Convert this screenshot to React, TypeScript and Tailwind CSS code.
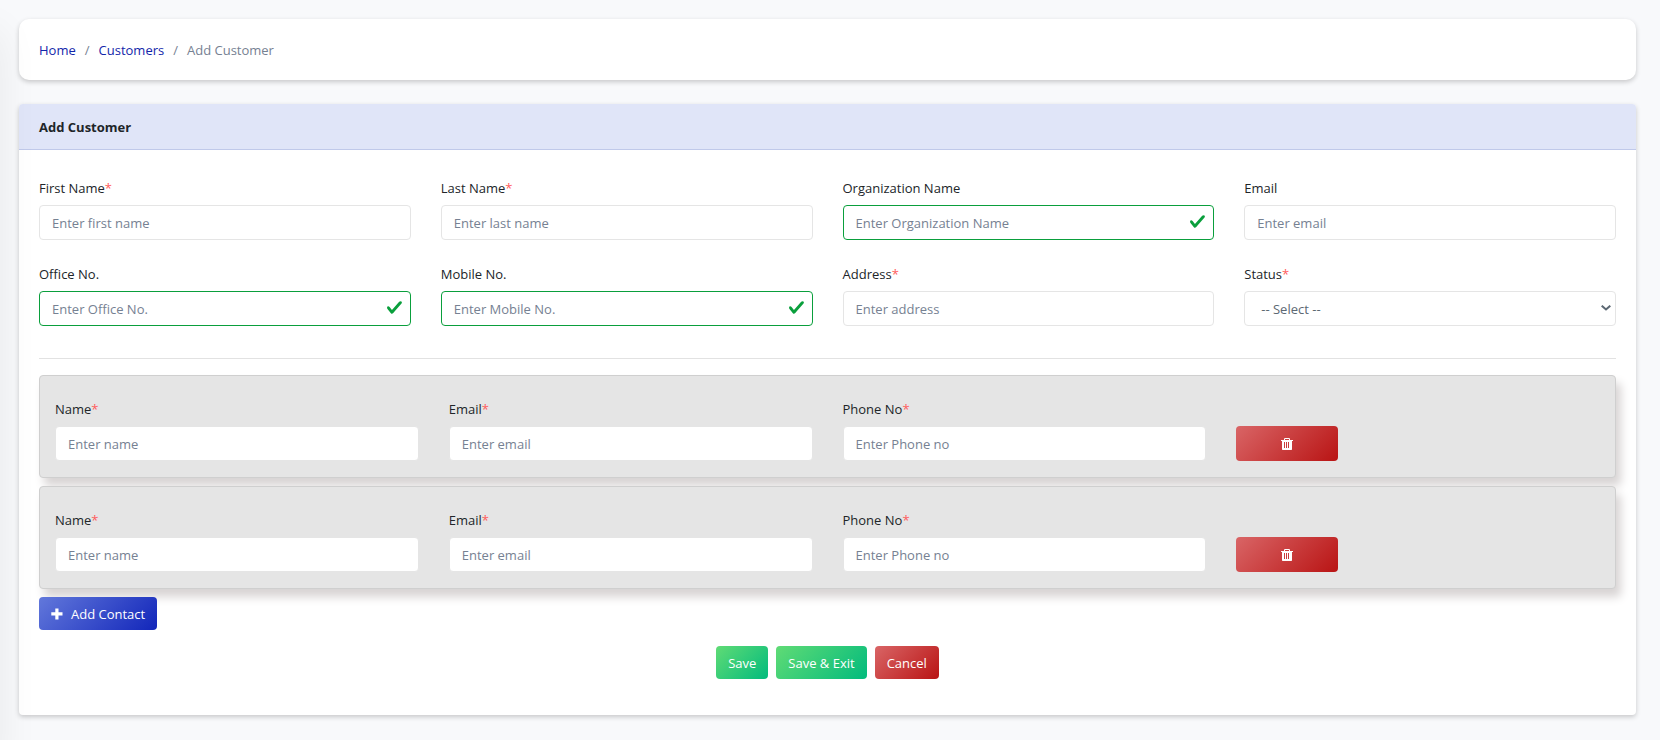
import { useState } from "react";

interface FieldProps {
  id: string;
  label: string;
  placeholder: string;
  required?: boolean;
  valid?: boolean;
  type?: string;
}

interface Contact {
  id: number;
}

const labelClass = "block h-5 mb-[7px] leading-5 text-[#212529]";
const inputClass =
  "block w-full h-[35px] px-3 rounded border bg-white text-[#5c6873] placeholder:text-[#768192] placeholder:opacity-100 outline-none";
const redButton = "rounded text-white bg-linear-[135deg] from-[#d96566] to-[#b91414]";
const greenButton =
  "h-[33px] px-3 rounded text-white bg-linear-[135deg] from-[#60db75] to-[#02bb7d]";

const Required = () => <span className="text-[#ff5c5c]">*</span>;

const Field = ({ id, label, placeholder, required, valid, type = "text" }: FieldProps) => {
  return (
    <div>
      <label htmlFor={id} className={labelClass}>
        {label}
        {required && <Required />}
      </label>
      <div className="relative">
        <input
          id={id}
          type={type}
          placeholder={placeholder}
          className={`${inputClass} ${valid ? "border-[#0a9f3c] pr-9" : "border-[#e5e5e5]"}`}
        />
        {valid && (
          <svg
            viewBox="0 0 8 8"
            className="absolute right-2 top-2 w-[17px] h-[17px] text-[#0a9f3c]"
            fill="currentColor"
            aria-hidden="true"
          >
            <path d="M2.3 6.73 .6 4.53c-.4-1.04.46-1.4 1.1-.8l1.1 1.4 3.4-3.8c.6-.63 1.6-.27 1.2.7l-4 4.6c-.43.5-.8.4-1.1.1z" />
          </svg>
        )}
      </div>
    </div>
  );
};

const PlusIcon = () => (
  <svg viewBox="0 0 12 12" className="w-3 h-3" fill="currentColor" aria-hidden="true">
    <path d="M4.300.5h3.200v3.800h4v3.200h-4v4H4.300v-4H.300V4.300h4z" />
  </svg>
);

const TrashIcon = () => (
  <svg viewBox="0 0 12 12" className="w-3 h-3" fill="currentColor" aria-hidden="true">
    <path
      fillRule="evenodd"
      d="M3 2V.8L3.8 0h4.4L9 .8V2h3v1h-1v8.4l-.6.6H1.6L1 11.400V3H0V2zM4 2h4V1H4zM3 4V10h1V4zM5 4V10h1V4zM7 4V10h1V4z"
    />
  </svg>
);

const ContactRow = ({ contact, onRemove }: { contact: Contact; onRemove: () => void }) => {
  return (
    <div className="grid grid-cols-12 gap-x-[30px] items-end mb-2 px-[15px] pt-[23px] pb-4 rounded border border-[#cfcfcf] bg-[#e5e5e5] shadow-[5px_8px_10px_0_#d8d4d4]">
      <div className="col-span-3">
        <Field id={`name-${contact.id}`} label="Name" placeholder="Enter name" required />
      </div>
      <div className="col-span-3">
        <Field id={`email-${contact.id}`} label="Email" placeholder="Enter email" type="email" required />
      </div>
      <div className="col-span-3">
        <Field id={`phone-${contact.id}`} label="Phone No" placeholder="Enter Phone no" type="tel" required />
      </div>
      <button
        type="button"
        aria-label="Delete contact"
        onClick={onRemove}
        className={`flex items-center justify-center h-[35px] ${redButton}`}
      >
        <TrashIcon />
      </button>
    </div>
  );
};

const App = () => {
  const [contacts, setContacts] = useState<Contact[]>([{ id: 1 }, { id: 2 }]);

  const addContact = () => {
    setContacts([...contacts, { id: Date.now() }]);
  };

  const removeContact = (id: number) => {
    setContacts(contacts.filter((c) => c.id !== id));
  };

  return (
    <div className="relative min-h-screen overflow-hidden pl-[19px] pr-6 pt-[19px] pb-6 bg-[#f8f9fb] font-['Open_Sans',sans-serif] text-[13px] leading-5 text-[#212529]">
      {/* Sidebar shadow */}
      <div className="absolute right-full top-8 -bottom-10 w-10 shadow-[0_0_40px_rgba(0,0,0,0.07)] pointer-events-none" />

      <nav
        aria-label="Breadcrumb"
        className="flex items-center gap-[9px] h-[61px] mb-6 px-5 rounded-[10px] bg-white shadow-[0_2px_5px_rgba(0,0,0,0.2)]"
      >
        <a href="#" className="text-[#1226aa]">Home</a>
        <span className="text-[#768192]">/</span>
        <a href="#" className="text-[#1226aa]">Customers</a>
        <span className="text-[#768192]">/</span>
        <span className="text-[#768192]">Add Customer</span>
      </nav>

      <form
        onSubmit={(e) => e.preventDefault()}
        className="rounded bg-white shadow-[0_2px_5px_rgba(0,0,0,0.2)]"
      >
        <h1 className="h-[46px] px-5 pt-[13px] rounded-t border-b border-[#c0c9ea] bg-[#e0e5f8] font-bold">
          Add Customer
        </h1>

        <div className="px-5 pt-7 pb-9">
          <div className="grid grid-cols-4 gap-x-[30px] gap-y-6">
            <Field id="firstName" label="First Name" placeholder="Enter first name" required />
            <Field id="lastName" label="Last Name" placeholder="Enter last name" required />
            <Field id="organization" label="Organization Name" placeholder="Enter Organization Name" valid />
            <Field id="email" label="Email" placeholder="Enter email" type="email" />
            <Field id="officeNo" label="Office No." placeholder="Enter Office No." type="tel" valid />
            <Field id="mobileNo" label="Mobile No." placeholder="Enter Mobile No." type="tel" valid />
            <Field id="address" label="Address" placeholder="Enter address" required />
            <div>
              <label htmlFor="status" className={labelClass}>
                Status
                <Required />
              </label>
              <div className="relative">
                <select id="status" className={`${inputClass} appearance-none px-4 border-[#e5e5e5]`}>
                  <option>-- Select --</option>
                  <option>Active</option>
                  <option>Inactive</option>
                </select>
                <svg
                  viewBox="0 0 10 6"
                  className="absolute right-[5px] top-3.5 w-2.5 h-1.5 text-[#5c6873] pointer-events-none"
                  fill="none"
                  stroke="currentColor"
                  strokeWidth="2"
                  aria-hidden="true"
                >
                  <path d="M.7.7 5 4.500 9.300.7" />
                </svg>
              </div>
            </div>
          </div>

          <hr className="mt-8 mb-4 border-[#e2e2e2]" />

          {/* Contacts */}
          {contacts.map((contact) => (
            <ContactRow
              key={contact.id}
              contact={contact}
              onRemove={() => removeContact(contact.id)}
            />
          ))}

          <button
            type="button"
            onClick={addContact}
            className="flex items-center gap-2 h-[33px] px-3 rounded text-white bg-linear-[135deg] from-[#6278db] to-[#1226ba]"
          >
            <PlusIcon />
            Add Contact
          </button>

          <div className="flex justify-center gap-2 mt-4">
            <button type="submit" className={greenButton}>Save</button>
            <button type="submit" className={greenButton}>Save &amp; Exit</button>
            <button type="button" className={`h-[33px] px-3 ${redButton}`}>Cancel</button>
          </div>
        </div>
      </form>
    </div>
  );
};

export default App;
